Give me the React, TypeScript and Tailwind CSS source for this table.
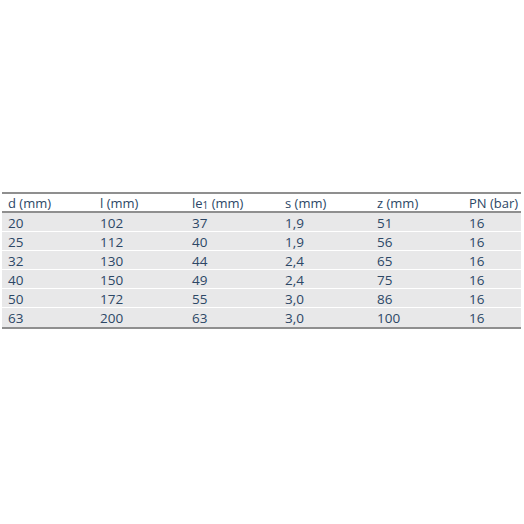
import React from 'react';

const headers: React.ReactNode[] = [
    'd (mm)',
    'l (mm)',
    <>le<span className="text-[10px] relative top-[1px]">1</span> (mm)</>,
    's (mm)',
    'z (mm)',
    'PN (bar)',
];

const rows = [
    ['20', '102', '37', '1,9', '51', '16'],
    ['25', '112', '40', '1,9', '56', '16'],
    ['32', '130', '44', '2,4', '65', '16'],
    ['40', '150', '49', '2,4', '75', '16'],
    ['50', '172', '55', '3,0', '86', '16'],
    ['63', '200', '63', '3,0', '100', '16'],
];

const cols = 'grid grid-cols-[92px_92px_93px_92px_92px_58px]';

export default function App() {
    return (
        <div className="w-[524px] h-[524px] bg-white flex flex-col justify-center font-['Open_Sans',sans-serif] text-[13px] text-[#2c4766]">
            <div className="ml-[2px] w-[519px] -mt-[4px] border-t-2 border-b-2 border-[#8f8f8f]">
                {/* Header */}
                <div className={`${cols} h-[19px] items-center border-b-2 border-[#8f8f8f]`}>
                    {headers.map((h, i) => (
                        <div key={i} className="pl-[6px] whitespace-nowrap">{h}</div>
                    ))}
                </div>
                {/* Rows */}
                {rows.map((r, i) => (
                    <div
                        key={i}
                        className={`${cols} h-[19px] items-center bg-[#e8e8e9] ${i < rows.length - 1 ? 'border-b border-white' : ''}`}
                    >
                        {r.map((c, j) => (
                            <div key={j} className="pl-[6px] text-[13.5px]">{c}</div>
                        ))}
                    </div>
                ))}
            </div>
        </div>
    );
}
